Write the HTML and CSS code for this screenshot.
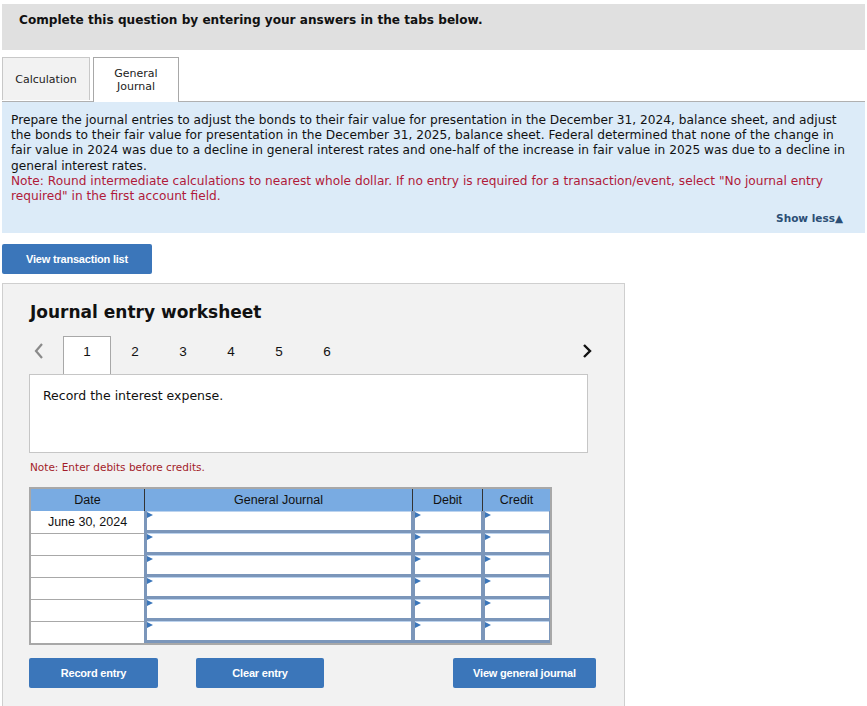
FILE: index.html
```html
<!DOCTYPE html>
<html lang="en">

<head>
    <meta charset="UTF-8">
    <title>General Journal</title>
    <link rel="stylesheet" href="styles.css">
</head>

<body>
    <div class="question-head">
        <h1>Complete this question by entering your answers in the tabs below.</h1>
    </div>

    <div class="tabs">
        <div class="tab">Calculation</div>
        <div class="tab active">General<br>Journal</div>
    </div>

    <div class="instructions">
        <p>Prepare the journal entries to adjust the bonds to their fair value for presentation in the December 31, 2024, balance sheet, and adjust the bonds to their fair value for presentation in the December 31, 2025, balance sheet. Federal determined that none of the change in fair value in 2024 was due to a decline in general interest rates and one-half of the increase in fair value in 2025 was due to a decline in general interest rates.</p>
        <p class="note">Note: Round intermediate calculations to nearest whole dollar. If no entry is required for a transaction/event, select "No journal entry required" in the first account field.</p>
        <div class="show-less">Show less&#9650;</div>
    </div>

    <button type="button" class="btn btn-list">View transaction list</button>

    <div class="worksheet">
        <h2>Journal entry worksheet</h2>

        <div class="pager">
            <span class="arrow prev">
                <svg width="12" height="16" viewBox="0 0 12 16"><path d="M9 1 L3 8 L9 15" fill="none" stroke="#8a8a8a" stroke-width="2.2"/></svg>
            </span>
            <span class="page current">1</span>
            <span class="page">2</span>
            <span class="page">3</span>
            <span class="page">4</span>
            <span class="page">5</span>
            <span class="page">6</span>
            <span class="arrow next">
                <svg width="12" height="16" viewBox="0 0 12 16"><path d="M3 2 L9 8 L3 14" fill="none" stroke="#111" stroke-width="2.4"/></svg>
            </span>
        </div>

        <div class="task-box">Record the interest expense.</div>

        <p class="debit-note">Note: Enter debits before credits.</p>

        <table class="journal">
            <thead>
                <tr>
                    <th class="col-date">Date</th>
                    <th class="col-account">General Journal</th>
                    <th class="col-debit">Debit</th>
                    <th class="col-credit">Credit</th>
                </tr>
            </thead>
            <tbody>
                <tr>
                    <td class="date">June 30, 2024</td>
                    <td class="field"><div class="cell"></div></td>
                    <td class="field"><div class="cell"></div></td>
                    <td class="field"><div class="cell"></div></td>
                </tr>
                <tr>
                    <td class="date"></td>
                    <td class="field"><div class="cell"></div></td>
                    <td class="field"><div class="cell"></div></td>
                    <td class="field"><div class="cell"></div></td>
                </tr>
                <tr>
                    <td class="date"></td>
                    <td class="field"><div class="cell"></div></td>
                    <td class="field"><div class="cell"></div></td>
                    <td class="field"><div class="cell"></div></td>
                </tr>
                <tr>
                    <td class="date"></td>
                    <td class="field"><div class="cell"></div></td>
                    <td class="field"><div class="cell"></div></td>
                    <td class="field"><div class="cell"></div></td>
                </tr>
                <tr>
                    <td class="date"></td>
                    <td class="field"><div class="cell"></div></td>
                    <td class="field"><div class="cell"></div></td>
                    <td class="field"><div class="cell"></div></td>
                </tr>
                <tr>
                    <td class="date"></td>
                    <td class="field"><div class="cell"></div></td>
                    <td class="field"><div class="cell"></div></td>
                    <td class="field"><div class="cell"></div></td>
                </tr>
            </tbody>
        </table>

        <div class="actions">
            <button type="button" class="btn btn-record">Record entry</button>
            <button type="button" class="btn btn-clear">Clear entry</button>
            <button type="button" class="btn btn-journal">View general journal</button>
        </div>
    </div>
</body>

</html>
```

FILE: styles.css
```css
body {
    margin: 0;
    padding: 4px 2px 0 2px;
    font-family: "DejaVu Sans", Verdana, sans-serif;
    color: #111;
    background-color: #fff;
}

/* шапка */
.question-head {
    background-color: #e0e0e0;
    height: 46px;
    padding: 0 17px;
}

.question-head h1 {
    margin: 0;
    padding-top: 9px;
    font-size: 12.1px;
    font-weight: bold;
}

/* вкладки */
.tabs {
    display: flex;
    gap: 3px;
    margin-top: 7px;
    height: 44px;
    border-bottom: 1px solid #b0b0b0;
}

.tab {
    width: 88px;
    height: 43px;
    box-sizing: border-box;
    display: flex;
    align-items: center;
    justify-content: center;
    text-align: center;
    font-size: 11px;
    line-height: 13px;
    background-color: #f2f2f2;
    border: 1px solid #c8c8c8;
    border-bottom: none;
    color: #222;
}

.tab.active {
    width: 86px;
    background-color: #fff;
    border-color: #a8a8a8;
    height: 45px;
    position: relative;
    z-index: 1;
}

/* блок з умовою */
.instructions {
    background-color: #dcebf8;
    padding: 11px 9px 7px 9px;
    font-size: 12.2px;
    line-height: 15.2px;
}

.instructions p {
    margin: 0;
}

.instructions .note {
    color: #b01a3a;
}

.show-less {
    text-align: right;
    padding-right: 13px;
    margin-top: 7px;
    font-size: 10.5px;
    font-weight: bold;
    color: #2b4e75;
}

.btn {
    display: block;
    background-color: #3b76ba;
    color: #fff;
    border: none;
    border-radius: 2px;
    font-family: "Liberation Sans", Arial, sans-serif;
    font-weight: bold;
    font-size: 11px;
    letter-spacing: -0.2px;
    height: 30px;
    cursor: pointer;
}

.btn-list {
    margin-top: 11px;
    width: 150px;
}

/* робочий аркуш */
.worksheet {
    margin-top: 9px;
    width: 623px;
    box-sizing: border-box;
    background-color: #f2f2f2;
    border: 1px solid #cfcfcf;
    border-bottom: none;
    padding: 18px 27px 20px 26px;
}

.worksheet h2 {
    margin: 0 0 0 1px;
    font-size: 17px;
    font-weight: bold;
}

.pager {
    display: flex;
    align-items: flex-start;
    margin-top: 14px;
    height: 38px;
    font-family: "Liberation Sans", Arial, sans-serif;
    font-size: 13.5px;
}

.arrow {
    display: flex;
    align-items: center;
    padding-top: 7px;
}

.arrow.prev {
    width: 34px;
    padding-left: 4px;
    box-sizing: border-box;
}

.arrow.next {
    margin-left: auto;
    margin-right: 4px;
}

.page {
    width: 48px;
    height: 38px;
    display: flex;
    justify-content: center;
    padding-top: 8px;
    box-sizing: border-box;
}

.page.current {
    background-color: #fff;
    border: 1px solid #a8a8a8;
    border-bottom: none;
    padding-top: 7px;
    color: #111;
}

.task-box {
    width: 559px;
    height: 79px;
    box-sizing: border-box;
    background-color: #fff;
    border: 1px solid #c6c6c6;
    padding: 13px 13px;
    font-size: 12.5px;
}

.debit-note {
    margin: 8px 0 14px 1px;
    font-size: 10.5px;
    color: #a31c2a;
}

/* таблиця */
.journal {
    border-collapse: separate;
    border-spacing: 0;
    table-layout: fixed;
    width: 523px;
    font-family: "Liberation Sans", Arial, sans-serif;
    font-size: 12.5px;
    border: 2px solid #a8a8a8;
}

.journal th {
    background-color: #79abe2;
    font-weight: normal;
    height: 22px;
    padding: 0;
    border-left: 1px solid #333;
    color: #111;
}

.journal th:first-child {
    border-left: none;
}

.col-date { width: 113px; }
.col-account { width: 267px; }
.col-debit { width: 69px; }
.col-credit { width: 67px; }

.journal td {
    padding: 0;
}

.journal td.date {
    background-color: #fff;
    text-align: center;
    line-height: 21px;
    height: 21px;
    border-top: 1px solid #a8a8a8;
}

.journal tr:first-child td.date {
    border-top: none;
    line-height: 22px;
}

.journal td.field {
    background-color: #7b96ba;
    vertical-align: top;
}

.cell {
    height: 18px;
    margin: 0 1px 3px 3px;
    background-color: #fff;
    border-top: 1px solid #bcd3ee;
    position: relative;
}

.cell::before {
    content: "";
    position: absolute;
    left: 0;
    top: 0;
    border-left: 6px solid #3b76ba;
    border-top: 3px solid transparent;
    border-bottom: 3px solid transparent;
}

.actions {
    display: flex;
    margin-top: 13px;
}

.btn-record {
    width: 129px;
}

.btn-clear {
    width: 128px;
    margin-left: 38px;
}

.btn-journal {
    width: 143px;
    margin-left: 129px;
}
```
